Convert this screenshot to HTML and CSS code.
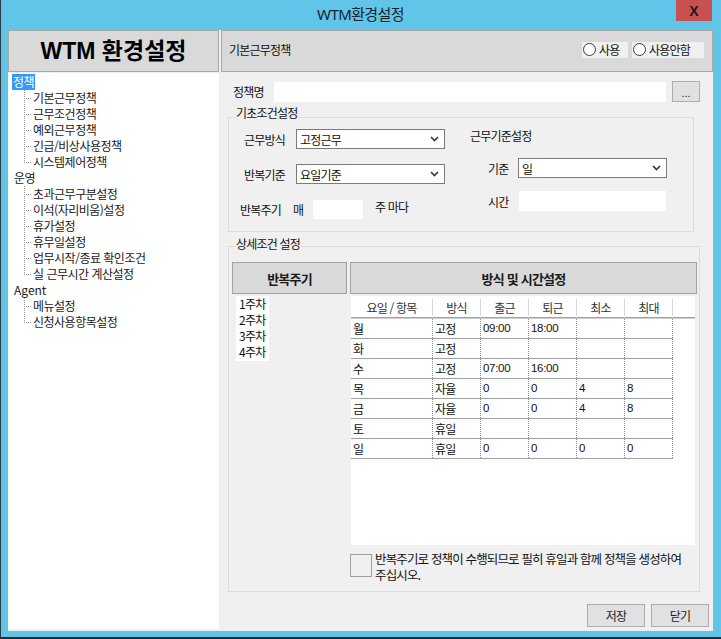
FILE: index.html
```html
<!DOCTYPE html>
<html lang="ko">
<head>
<meta charset="utf-8">
<title>WTM환경설정</title>
<link rel="stylesheet" href="styles.css">
</head>
<body>
<div class="window">
  <div class="titlebar">
    <div class="title">WTM환경설정</div>
    <div class="close">X</div>
  </div>
  <div class="client">
    <div class="leftpane">
      <div class="lhead">WTM 환경설정</div>
      <div class="tree">
        <div class="node"><span class="sel">정책</span></div>
        <ul class="kids">
          <li>기본근무정책</li>
          <li>근무조건정책</li>
          <li>예외근무정책</li>
          <li>긴급/비상사용정책</li>
          <li>시스템제어정책</li>
        </ul>
        <div class="node"><span class="plain">운영</span></div>
        <ul class="kids">
          <li>초과근무구분설정</li>
          <li>이석(자리비움)설정</li>
          <li>휴가설정</li>
          <li>휴무일설정</li>
          <li>업무시작/종료 확인조건</li>
          <li>실 근무시간 계산설정</li>
        </ul>
        <div class="node"><span class="plain latin">Agent</span></div>
        <ul class="kids">
          <li>메뉴설정</li>
          <li>신청사용항목설정</li>
        </ul>
      </div>
    </div>
    <div class="rightpane">
      <div class="rhead">
        <span class="rtitle">기본근무정책</span>
        <div class="radios">
          <div class="radio r1"><span class="dot"></span><span>사용</span></div>
          <div class="radio r2"><span class="dot"></span><span>사용안함</span></div>
        </div>
      </div>
      <div class="rbody">
        <div class="name-row">
          <span class="name-label">정책명</span>
          <div class="textbox name-input"></div>
          <div class="btn dots">...</div>
        </div>

        <div class="group group1">
          <div class="gtitle">기초조건설정</div>
          <div class="g1cols">
            <div class="g1left">
              <div class="frow">
                <span class="flabel">근무방식</span>
                <div class="select s-left"><span>고정근무</span><svg width="9" height="6" viewBox="0 0 9 6"><path d="M1 1 L4.5 4.5 L8 1" fill="none" stroke="#3a3a3a" stroke-width="1.7"/></svg></div>
              </div>
              <div class="frow r2row">
                <span class="flabel">반복기준</span>
                <div class="select s-left"><span>요일기준</span><svg width="9" height="6" viewBox="0 0 9 6"><path d="M1 1 L4.5 4.5 L8 1" fill="none" stroke="#3a3a3a" stroke-width="1.7"/></svg></div>
              </div>
              <div class="frow r3row">
                <span class="flabel">반복주기</span>
                <span class="mae">매</span>
                <div class="textbox week-input"></div>
                <span class="weekly">주 마다</span>
              </div>
            </div>
            <div class="g1right">
              <div class="subtitle">근무기준설정</div>
              <div class="frow basis-row">
                <span class="rlabel">기준</span>
                <div class="select s-right"><span>일</span><svg width="9" height="6" viewBox="0 0 9 6"><path d="M1 1 L4.5 4.5 L8 1" fill="none" stroke="#3a3a3a" stroke-width="1.7"/></svg></div>
              </div>
              <div class="frow time-row">
                <span class="rlabel tl">시간</span>
                <div class="textbox time-input"></div>
              </div>
            </div>
          </div>
        </div>

        <div class="group group2">
          <div class="gtitle">상세조건 설정</div>
          <div class="detail">
            <div class="dleft">
              <div class="dhead">반복주기</div>
              <div class="weeks">
                <div>1주차</div>
                <div>2주차</div>
                <div>3주차</div>
                <div>4주차</div>
              </div>
            </div>
            <div class="dright">
              <div class="dhead">방식 및 시간설정</div>
              <div class="gridbox">
                <div class="ghead">
                  <div class="hc">요일 / 항목</div>
                  <div class="hc">방식</div>
                  <div class="hc">출근</div>
                  <div class="hc">퇴근</div>
                  <div class="hc">최소</div>
                  <div class="hc">최대</div>
                </div>
                <div class="gline"></div>
                <div class="grow"><div class="c">월</div><div class="c">고정</div><div class="c num">09:00</div><div class="c num">18:00</div><div class="c"></div><div class="c"></div></div>
                <div class="grow"><div class="c">화</div><div class="c">고정</div><div class="c"></div><div class="c"></div><div class="c"></div><div class="c"></div></div>
                <div class="grow"><div class="c">수</div><div class="c">고정</div><div class="c num">07:00</div><div class="c num">16:00</div><div class="c"></div><div class="c"></div></div>
                <div class="grow"><div class="c">목</div><div class="c">자율</div><div class="c num">0</div><div class="c num">0</div><div class="c num">4</div><div class="c num">8</div></div>
                <div class="grow"><div class="c">금</div><div class="c">자율</div><div class="c num">0</div><div class="c num">0</div><div class="c num">4</div><div class="c num">8</div></div>
                <div class="grow"><div class="c">토</div><div class="c">휴일</div><div class="c"></div><div class="c"></div><div class="c"></div><div class="c"></div></div>
                <div class="grow"><div class="c">일</div><div class="c">휴일</div><div class="c num">0</div><div class="c num">0</div><div class="c num">0</div><div class="c num">0</div></div>
              </div>
              <div class="note">
                <div class="notebox"></div>
                <div class="notetext">반복주기로 정책이 수행되므로 필히 휴일과 함께 정책을 생성하여<br>주십시오.</div>
              </div>
            </div>
          </div>
        </div>

        <div class="buttons">
          <div class="btn act">저장</div>
          <div class="btn act">닫기</div>
        </div>
      </div>
    </div>
  </div>
</div>
</body>
</html>
```
FILE: styles.css
```css
* {
  box-sizing: border-box;
  margin: 0;
  padding: 0;
}

body {
  margin: 0;
  background: #61c5ea;
  font-family: "Noto Sans CJK KR", "Noto Sans", sans-serif;
  font-size: 12px;
  color: #111;
}

.window {
  width: 721px;
  height: 639px;
  background: #61c5ea;
  border-left: 1px solid #2c3b42;
  border-bottom: 2px solid #1f2b31;
  display: flex;
  flex-direction: column;
  overflow: hidden;
}

.titlebar {
  height: 30px;
  display: flex;
  align-items: flex-start;
  flex-shrink: 0;
}

.title {
  flex: 1;
  text-align: center;
  padding-left: 44px;
  line-height: 28px;
  font-family: "Noto Sans", "Noto Sans CJK KR", sans-serif;
  font-size: 15px;
  letter-spacing: -0.6px;
  color: #14232b;
}

.close {
  width: 36px;
  height: 21px;
  margin-right: 9px;
  background: #c75050;
  color: #1a1a1a;
  font: bold 14px "Liberation Sans", sans-serif;
  display: flex;
  align-items: center;
  justify-content: center;
}

.client {
  margin-left: 7px;
  width: 705px;
  height: 601px;
  background: #f0f0f0;
  display: flex;
  gap: 2px;
  flex-shrink: 0;
}

.leftpane {
  width: 211px;
  display: flex;
  flex-direction: column;
}

.lhead {
  height: 42px;
  background: #d9d9d9;
  border: 1px solid #a8a8a8;
  display: flex;
  align-items: center;
  justify-content: center;
  padding-bottom: 4px;
  font: bold 23px "Liberation Sans", "Noto Sans CJK KR", sans-serif;
  color: #000;
}

.tree {
  flex: 1;
  margin-top: 1px;
  margin-bottom: 2px;
  background: #fff;
  padding: 1px 0 0 4px;
  line-height: 16px;
  letter-spacing: -0.5px;
  color: #1a1a1a;
}

.node {
  height: 16px;
}

.sel {
  display: inline-block;
  background: #3399ff;
  color: #fff;
  padding: 0 1px 0 1px;
  line-height: 16px;
  height: 16px;
}

.plain {
  padding-left: 2px;
}

.latin {
  letter-spacing: 0;
}

.kids {
  list-style: none;
  margin-left: 12px;
}

.kids li {
  height: 16px;
  padding-left: 9px;
  white-space: nowrap;
  background-image:
    repeating-linear-gradient(to bottom, #9a9a9a 0 1px, transparent 1px 2px),
    repeating-linear-gradient(to right, #9a9a9a 0 1px, transparent 1px 2px);
  background-size: 1px 100%, 8px 1px;
  background-position: 0 0, 0 8px;
  background-repeat: no-repeat;
}

.kids li:last-child {
  background-size: 1px 9px, 8px 1px;
}

.rightpane {
  width: 492px;
  display: flex;
  flex-direction: column;
}

.rhead {
  height: 42px;
  background: #d9d9d9;
  border: 1px solid #a8a8a8;
  display: flex;
  align-items: center;
  justify-content: space-between;
  padding: 0 8px 3px 7px;
  letter-spacing: -0.8px;
}

.radios {
  display: flex;
  gap: 4px;
}

.radio {
  height: 16px;
  background: #f0f0f0;
  display: flex;
  align-items: center;
  gap: 3px;
  padding-left: 1px;
}

.r1 { width: 46px; }
.r2 { width: 72px; }

.dot {
  width: 13px;
  height: 13px;
  border-radius: 50%;
  border: 1px solid #3a3a3a;
  background: #fff;
  flex-shrink: 0;
}

.rbody {
  flex: 1;
  display: flex;
  flex-direction: column;
  letter-spacing: -0.8px;
}

.name-row {
  margin: 9px 0 0 12px;
  height: 21px;
  display: flex;
  align-items: center;
}

.name-label {
  width: 41px;
}

.textbox {
  background: #fff;
}

.name-input {
  width: 392px;
  height: 20px;
}

.btn {
  background: #e1e1e1;
  border: 1px solid #adadad;
  display: flex;
  align-items: center;
  justify-content: center;
  color: #222;
}

.dots {
  width: 28px;
  height: 21px;
  margin-left: 6px;
  letter-spacing: 0;
  font-family: "Liberation Sans", sans-serif;
  font-size: 11px;
  padding-top: 3px;
}

.group {
  border: 1px solid #dcdcdc;
  margin-left: 7px;
}

.gtitle {
  width: fit-content;
  background: #f0f0f0;
  margin-left: 7px;
  line-height: 14px;
  padding-right: 1px;
}

.group1 {
  margin-top: 15px;
  width: 466px;
  height: 115px;
}

.group1 .gtitle {
  margin-top: -12px;
}

.g1cols {
  display: flex;
  margin-top: 9px;
}

.g1left {
  margin-left: 11px;
  width: 205px;
}

.frow {
  display: flex;
  align-items: center;
  height: 20px;
}

.flabel {
  width: 45px;
  text-align: right;
  margin-right: 11px;
  white-space: nowrap;
}

.select {
  height: 20px;
  border: 1px solid #7a7a7a;
  background: #fff;
  display: flex;
  align-items: center;
  justify-content: space-between;
  padding: 0 5px 0 3px;
}

.select svg {
  display: block;
}

.s-left {
  width: 149px;
}

.r2row {
  margin-top: 15px;
}

.r3row {
  margin-top: 16px;
  height: 19px;
}

.r3row .flabel {
  text-align: left;
  width: 53px;
  margin-right: 0;
}

.mae {
  width: 20px;
}

.week-input {
  width: 50px;
  height: 19px;
}

.weekly {
  margin-left: 12px;
  margin-top: -6px;
}

.g1right {
  margin-left: 25px;
}

.subtitle {
  line-height: 14px;
}

.basis-row {
  margin-top: 15px;
  padding-left: 18px;
}

.rlabel {
  width: 30px;
}

.rlabel.tl {
  width: 31px;
}

.s-right {
  width: 149px;
}

.time-row {
  margin-top: 13px;
  padding-left: 18px;
}

.time-input {
  width: 147px;
  height: 20px;
}

.group2 {
  margin-top: 14px;
  width: 472px;
  height: 346px;
}

.group2 .gtitle {
  margin-top: -10px;
}

.detail {
  display: flex;
  gap: 3px;
  padding-left: 3px;
  margin-top: 11px;
}

.dleft {
  width: 115px;
}

.dright {
  width: 347px;
}

.dhead {
  height: 32px;
  background: #d9d9d9;
  border: 1px solid #a3a3a3;
  display: flex;
  align-items: center;
  justify-content: center;
  font-weight: bold;
  font-size: 13px;
  color: #1a1a1a;
}

.weeks {
  margin: 2px 0 0 4px;
  width: 33px;
  height: 65px;
  background: #fff;
  padding: 0 0 0 3px;
  line-height: 16px;
  letter-spacing: -0.7px;
  white-space: nowrap;
}

.gridbox {
  margin: 2px 0 0 1px;
  width: 344px;
  height: 249px;
  background: #fff;
}

.ghead,
.grow {
  display: grid;
  grid-template-columns: 82px 48px 48px 48px 48px 48px;
  width: 322px;
}

.ghead {
  height: 21px;
}

.hc {
  margin: 3px 0 2px;
  border-right: 1px solid #d6d6d6;
  display: flex;
  align-items: center;
  justify-content: center;
  color: #333;
  white-space: pre;
}

.gline {
  height: 2px;
  background: linear-gradient(to bottom, #a3a3a3 0 1px, #cfcfcf 1px 2px);
}

.grow {
  height: 20px;
  border-bottom: 1px solid #a0a0a0;
}

.c {
  border-right: 1px dotted #8a8a8a;
  padding-left: 2px;
  line-height: 19px;
  white-space: nowrap;
}

.c.num {
  font-family: "Liberation Sans", sans-serif;
  font-size: 11.5px;
  letter-spacing: -0.3px;
}

.note {
  display: flex;
  margin-top: 9px;
  height: 23px;
}

.notebox {
  width: 22px;
  height: 23px;
  border: 1px solid #a0a0a0;
  background: #f0f0f0;
}

.notetext {
  margin-left: 3px;
  margin-top: -3px;
  font-size: 12.5px;
  line-height: 16px;
  letter-spacing: -0.85px;
  white-space: nowrap;
}

.buttons {
  margin-top: 12px;
  display: flex;
  justify-content: flex-end;
  gap: 6px;
  padding-right: 4px;
}

.act {
  width: 58px;
  height: 23px;
}
```
